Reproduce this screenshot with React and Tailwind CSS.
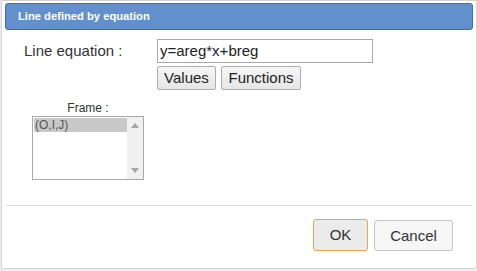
import React from "react";

export default function App() {
  const font = { fontFamily: '"Liberation Sans", Arial, sans-serif' };
  return (
    <div className="w-[477px] h-[271px] bg-[#ededed] overflow-hidden" style={font}>
      <div className="ml-[1px] w-[476px] h-[269px] bg-white border border-[#d4d4d4] rounded-br-[3px] pt-[2px] px-[3px] flex flex-col">
        <div className="h-[27px] bg-[#6190cd] border border-[#2f6fd1] rounded-[3px] pl-[12px] flex items-center text-white font-bold text-[11.2px]">
          Line defined by equation
        </div>
        <div className="flex mt-[9px]">
          <div className="w-[152px] pl-[19px] pt-[3px] text-[15px] text-[#333] leading-[18px]">Line equation :</div>
          <div className="flex flex-col">
            <div className="w-[216px] h-[24px] border border-[#a9a9a9] pl-[2px] text-[15px] leading-[21px] text-[#222]">y=areg*x+breg</div>
            <div className="flex gap-[5px] mt-[3px]">
              <div className="w-[59px] h-[24px] border border-[#adadad] rounded-[2px] bg-gradient-to-b from-[#f6f6f6] to-[#e6e6e6] text-[15px] leading-[22px] text-center text-[#222]">Values</div>
              <div className="w-[80px] h-[24px] border border-[#adadad] rounded-[2px] bg-gradient-to-b from-[#f6f6f6] to-[#e6e6e6] text-[15px] leading-[22px] text-center text-[#222]">Functions</div>
            </div>
          </div>
        </div>
        <div className="ml-[27px] mt-[11px] w-[112px] flex flex-col">
          <div className="text-[12px] text-[#333] text-center leading-[14px]">Frame :</div>
          <div className="mt-[1px] h-[64px] border border-[#a9a9a9] flex">
            <div className="flex-1 pt-[1px] pl-[1px]">
              <div className="h-[14px] bg-[#c8c8c8] text-[12px] leading-[14px] text-[#555] pl-[1px]">(O,I,J)</div>
            </div>
            <div className="w-[16px] bg-[#f0f0f0] flex flex-col items-center justify-between py-[6px]">
              <svg width="8" height="5" viewBox="0 0 8 5"><path d="M0 5 L4 0 L8 5 Z" fill="#a3a3a3" /></svg>
              <svg width="8" height="5" viewBox="0 0 8 5"><path d="M0 0 L4 5 L8 0 Z" fill="#a3a3a3" /></svg>
            </div>
          </div>
        </div>
        <div className="mt-[25px] ml-[1px] mr-[1px] h-[1px] bg-[#dcdcdc]"></div>
        <div className="flex justify-end mt-[13px] pr-[20px] gap-[6px] items-start">
          <div className="w-[55px] h-[32px] border border-[#e9a43f] rounded-[3px] bg-[#ebebeb] text-[15px] leading-[30px] text-center text-[#333]">OK</div>
          <div className="w-[79px] h-[31px] mt-[1px] border border-[#c6c6c6] rounded-[3px] bg-[#f6f6f6] text-[15px] leading-[29px] text-center text-[#333]">Cancel</div>
        </div>
      </div>
    </div>
  );
}
